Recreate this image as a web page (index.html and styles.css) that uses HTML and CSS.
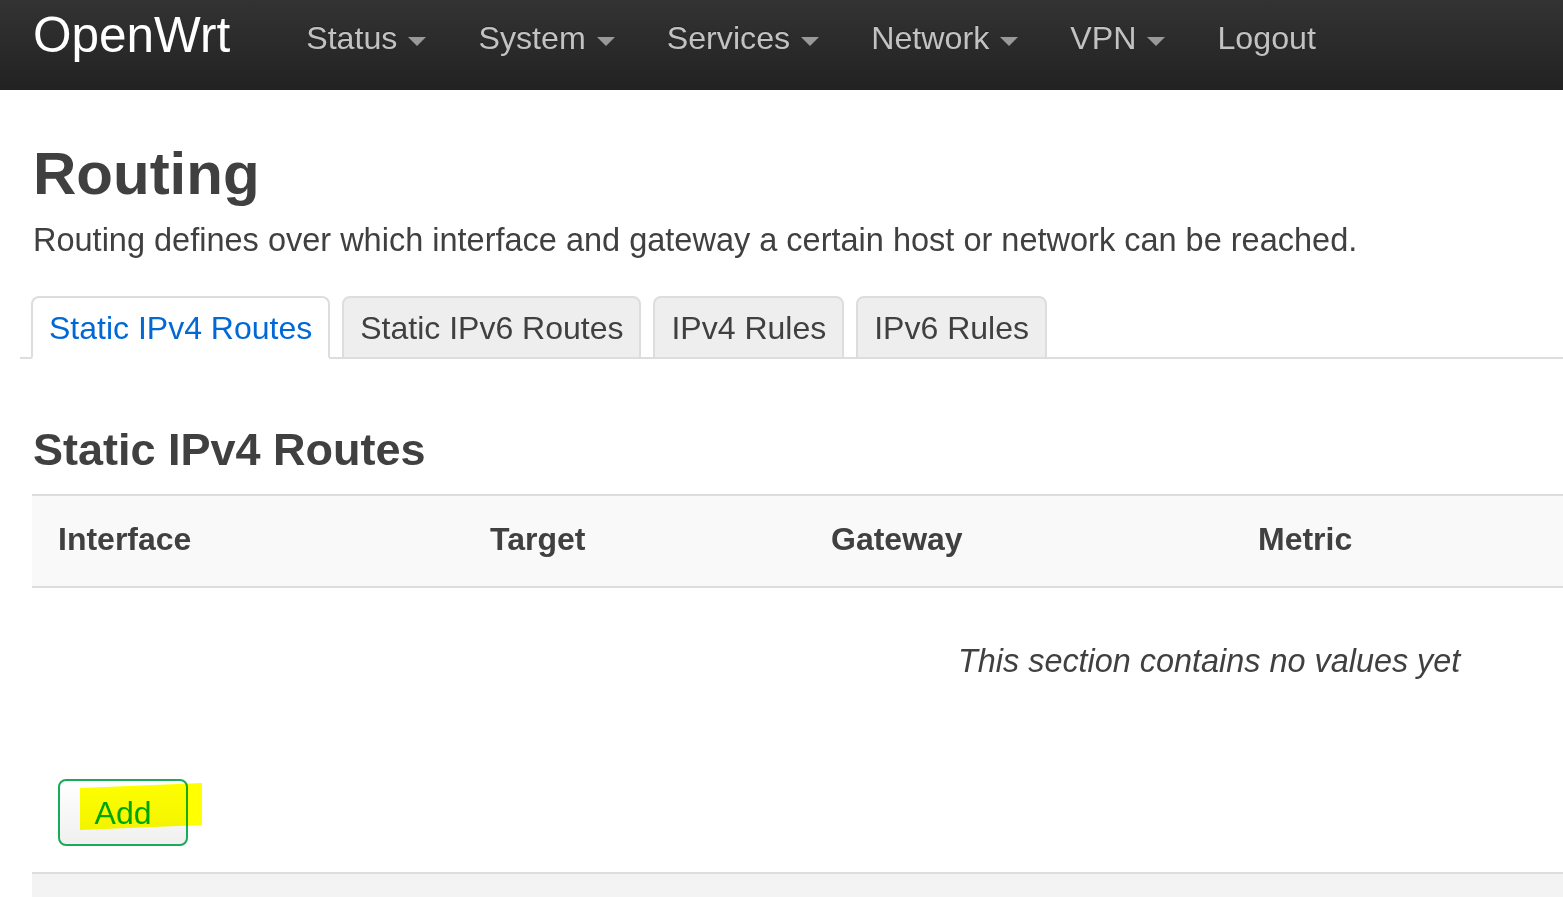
FILE: index.html
```html
<!DOCTYPE html>
<html lang="en">
<head>
<meta charset="utf-8">
<title>OpenWrt - Routing</title>
<link rel="stylesheet" href="styles.css">
</head>
<body>
<header class="navbar">
  <a class="brand" href="#">OpenWrt</a>
  <ul class="nav">
    <li><a href="#"><span>Status</span><i class="caret"></i></a></li>
    <li><a href="#"><span>System</span><i class="caret"></i></a></li>
    <li><a href="#"><span>Services</span><i class="caret"></i></a></li>
    <li><a href="#"><span>Network</span><i class="caret"></i></a></li>
    <li><a href="#"><span>VPN</span><i class="caret"></i></a></li>
    <li><a href="#"><span>Logout</span></a></li>
  </ul>
</header>
<main class="main">
  <h1 class="page-title">Routing</h1>
  <p class="page-desc">Routing defines over which interface and gateway a certain host or network can be reached.</p>
  <ul class="tabs">
    <li class="tab active"><a href="#">Static IPv4 Routes</a></li>
    <li class="tab"><a href="#">Static IPv6 Routes</a></li>
    <li class="tab"><a href="#">IPv4 Rules</a></li>
    <li class="tab"><a href="#">IPv6 Rules</a></li>
  </ul>
  <section class="section">
    <h2 class="section-title">Static IPv4 Routes</h2>
    <div class="table">
      <div class="thead">
        <div class="th">Interface</div>
        <div class="th">Target</div>
        <div class="th">Gateway</div>
        <div class="th">Metric</div>
      </div>
      <div class="empty">This section contains no values yet</div>
    </div>
    <div class="actions">
      <button class="btn-add">Add</button>
      <span class="highlight"></span>
    </div>
  </section>
  <div class="footer-bar"></div>
</main>
</body>
</html>
```

FILE: styles.css
```css
html, body {
  margin: 0;
  padding: 0;
  background: #fff;
}
body {
  width: 1563px;
  height: 897px;
  overflow: hidden;
  font-family: "Liberation Sans", Arial, sans-serif;
  color: #404040;
}
a { text-decoration: none; }

.navbar {
  height: 90px;
  display: flex;
  align-items: flex-start;
  padding-left: 33px;
  background: linear-gradient(to bottom, #333333, #222222);
  box-sizing: border-box;
}
.brand {
  font-size: 49.5px;
  line-height: 49px;
  margin-top: 10px;
  color: #ffffff;
}
.nav {
  list-style: none;
  margin: 22px 0 0 50px;
  padding: 0;
  display: flex;
}
.nav li a {
  display: flex;
  align-items: flex-start;
  padding: 0 26px;
  font-size: 32.2px;
  line-height: 32px;
  color: #c2c2c2;
  text-shadow: 0 -1px 0 rgba(0,0,0,0.25);
}
.caret {
  display: block;
  width: 0;
  height: 0;
  margin: 15px 0 0 11px;
  border-top: 9px solid #999;
  border-left: 9.5px solid transparent;
  border-right: 9.5px solid transparent;
}

.main {
  padding-left: 32px;
}
.page-title {
  margin: 54px 0 0 1px;
  font-size: 60px;
  line-height: 60px;
  font-weight: bold;
  color: #404040;
}
.page-desc {
  margin: 20px 0 0 1px;
  font-size: 32.5px;
  line-height: 32px;
}

.tabs {
  list-style: none;
  margin: 40px 0 0 -12px;
  padding: 0 0 0 11px;
  display: flex;
  border-bottom: 2px solid #dddddd;
}
.tab {
  margin: 0 12px -2px 0;
  background: #eeeeee;
  border: 2px solid #dddddd;
  border-radius: 8px 8px 0 0;
}
.tab a {
  display: block;
  padding: 14px 16px 13px;
  font-size: 32px;
  line-height: 32px;
  color: #404040;
}
.tab.active {
  background: #ffffff;
  border-bottom-color: #ffffff;
}
.tab.active a {
  color: #0069d6;
}

.section-title {
  margin: 68px 0 0 1px;
  font-size: 45px;
  line-height: 45px;
  font-weight: bold;
  color: #404040;
}
.table {
  margin-top: 22px;
}
.thead {
  display: grid;
  grid-template-columns: 432px 341px 427px 1fr;
  background: #f9f9f9;
  border-top: 2px solid #dddddd;
  border-bottom: 2px solid #dddddd;
}
.th {
  padding: 27px 0 31px 26px;
  font-size: 32px;
  line-height: 32px;
  font-weight: bold;
}
.empty {
  padding: 57px 0 0 926px;
  font-size: 32.4px;
  line-height: 32px;
  font-style: italic;
  white-space: nowrap;
}
.actions {
  position: relative;
  margin-top: 102px;
  padding-left: 26px;
}
.btn-add {
  width: 130px;
  height: 67px;
  padding: 0;
  border: 2px solid #17ad58;
  border-radius: 8px;
  background: linear-gradient(to bottom, #ffffff, #f0f0f0);
  font-family: "Liberation Sans", Arial, sans-serif;
  font-size: 32px;
  line-height: 32px;
  color: #00a651;
  text-align: center;
  box-sizing: border-box;
}
.highlight {
  position: absolute;
  left: 48px;
  top: 4px;
  width: 122px;
  height: 47px;
  background: #ffff00;
  mix-blend-mode: multiply;
  clip-path: polygon(0 5px, 100% 0, 100% 42px, 0 47px);
}
.footer-bar {
  margin-top: 26px;
  height: 40px;
  background: #f3f3f3;
  border-top: 2px solid #dddddd;
}
```
